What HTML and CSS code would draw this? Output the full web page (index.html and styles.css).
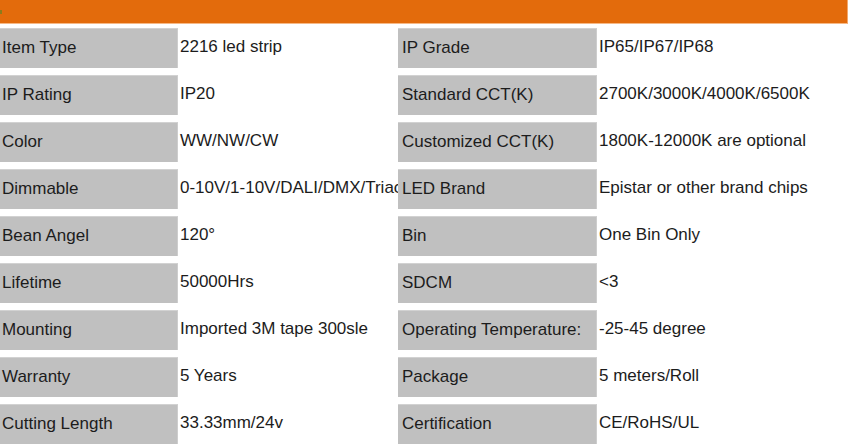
FILE: index.html
```html
<!DOCTYPE html>
<html>
<head>
<meta charset="utf-8">
<link rel="stylesheet" href="styles.css">
</head>
<body>
<div class="topbar"><span class="mark"></span></div>
<div class="specs">
  <div class="label">Item Type</div><div class="value">2216 led strip</div>
  <div class="label label-right">IP Grade</div><div class="value">IP65/IP67/IP68</div>

  <div class="label">IP Rating</div><div class="value">IP20</div>
  <div class="label label-right">Standard CCT(K)</div><div class="value">2700K/3000K/4000K/6500K</div>

  <div class="label">Color</div><div class="value">WW/NW/CW</div>
  <div class="label label-right">Customized CCT(K)</div><div class="value">1800K-12000K are optional</div>

  <div class="label">Dimmable</div><div class="value">0-10V/1-10V/DALI/DMX/Triac</div>
  <div class="label label-right">LED Brand</div><div class="value">Epistar or other brand chips</div>

  <div class="label">Bean Angel</div><div class="value">120°</div>
  <div class="label label-right">Bin</div><div class="value">One Bin Only</div>

  <div class="label">Lifetime</div><div class="value">50000Hrs</div>
  <div class="label label-right">SDCM</div><div class="value">&lt;3</div>

  <div class="label">Mounting</div><div class="value">Imported 3M tape 300sle</div>
  <div class="label label-right">Operating Temperature:</div><div class="value">-25-45 degree</div>

  <div class="label">Warranty</div><div class="value">5 Years</div>
  <div class="label label-right">Package</div><div class="value">5 meters/Roll</div>

  <div class="label">Cutting Length</div><div class="value">33.33mm/24v</div>
  <div class="label label-right">Certification</div><div class="value">CE/RoHS/UL</div>
</div>
</body>
</html>
```
FILE: styles.css
```css
html, body {
  margin: 0;
  padding: 0;
  background: #ffffff;
}
body {
  font-family: "Liberation Sans", Arial, sans-serif;
  font-size: 17px;
  color: #1c1c1c;
  overflow: hidden;
}
.topbar {
  width: 847px;
  height: 23px;
  background: #e36b0c;
  border-bottom: 1px solid #f6b987;
  border-right: 1px solid #f3a86c;
  display: flex;
  align-items: center;
}
.mark {
  width: 2px;
  height: 4px;
  background: #8d7b1c;
}
.specs {
  display: grid;
  grid-template-columns: 178px 220px 199px 251px;
  grid-auto-rows: 40px;
  row-gap: 7px;
  margin-top: 4px;
}
.label,
.value {
  display: flex;
  align-items: center;
  white-space: nowrap;
  overflow: hidden;
  box-sizing: border-box;
  padding-bottom: 2px;
}
.label {
  background: #c0c0c0;
  border-top: 1px solid #d2d2d2;
  border-right: 1px solid #cdcdcd;
  padding-left: 2px;
}
.label-right {
  padding-left: 4px;
}
.value {
  padding-left: 2px;
}
```
